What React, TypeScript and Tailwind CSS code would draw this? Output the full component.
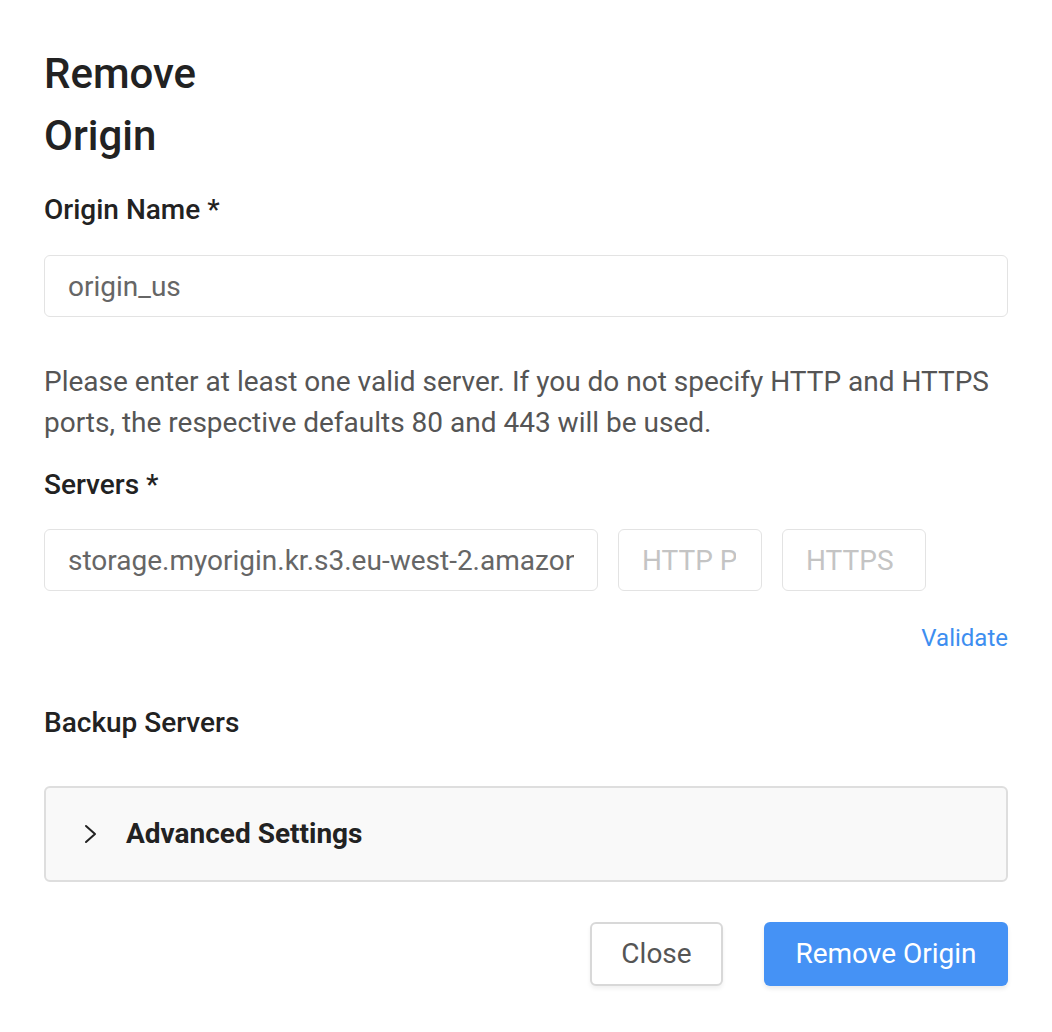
import React from "react";

export default function App() {
  return (
    <div className="min-h-screen bg-white px-[44px] pt-[43px] text-[#222]" style={{ fontFamily: "Roboto, 'Liberation Sans', sans-serif" }}>
      <h2 className="max-w-[220px] text-[42px] font-medium leading-[62px] text-[#222]">Remove Origin</h2>

      <div className="mt-[25px] text-[28px] font-medium leading-[36px] text-[#222]">Origin Name *</div>
      <input
        className="mt-[27px] block h-[62px] w-full rounded-[6px] border border-[#e3e3e3] px-[23px] text-[28px] text-[#666] outline-none"
        defaultValue="origin_us"
      />

      <p className="mt-[44px] text-[28px] leading-[41px] text-[#555]">
        Please enter at least one valid server. If you do not specify HTTP and HTTPS ports, the respective defaults 80 and 443 will be used.
      </p>

      <div className="mt-[24px] text-[28px] font-medium leading-[36px] text-[#222]">Servers *</div>
      <div className="mt-[26px] flex gap-[20px]">
        <input
          className="block h-[62px] w-[554px] rounded-[6px] border border-[#e3e3e3] px-[23px] text-[28px] text-[#666] outline-none"
          defaultValue="storage.myorigin.kr.s3.eu-west-2.amazonaws.com"
        />
        <input
          className="block h-[62px] w-[144px] rounded-[6px] border border-[#e3e3e3] pl-[23px] pr-[25px] text-[28px] text-[#666] outline-none placeholder:text-[#c4c4c4]"
          placeholder="HTTP Port"
        />
        <input
          className="block h-[62px] w-[144px] rounded-[6px] border border-[#e3e3e3] pl-[23px] pr-[25px] text-[28px] text-[#666] outline-none placeholder:text-[#c4c4c4]"
          placeholder="HTTPS Port"
        />
      </div>

      <div className="mt-[29px] flex justify-end">
        <span className="text-[24px] leading-[36px] text-[#3d8ef0]">Validate</span>
      </div>

      <div className="mt-[49px] text-[28px] font-medium leading-[36px] text-[#222]">Backup Servers</div>

      <div className="mt-[45px] flex h-[96px] items-center rounded-[6px] border-2 border-[#dedede] bg-[#f9f9f9] pl-[38px]">
        <svg width="14" height="20" viewBox="0 0 14 20" fill="none" className="mr-[28px]">
          <path d="M2 2 L11 10 L2 18" stroke="#222" strokeWidth="2" strokeLinecap="round" strokeLinejoin="round" />
        </svg>
        <span className="text-[28px] font-bold text-[#222]">Advanced Settings</span>
      </div>

      <div className="mt-[40px] flex justify-end gap-[41px]">
        <button className="h-[64px] w-[133px] rounded-[6px] border-2 border-[#d8d8d8] bg-white text-[28px] text-[#555] shadow-[0_3px_4px_rgba(0,0,0,0.06)]">
          Close
        </button>
        <button className="h-[64px] w-[244px] rounded-[6px] bg-[#4592f5] text-[28px] text-white shadow-[0_3px_4px_rgba(0,0,0,0.08)]">
          Remove Origin
        </button>
      </div>
    </div>
  );
}
